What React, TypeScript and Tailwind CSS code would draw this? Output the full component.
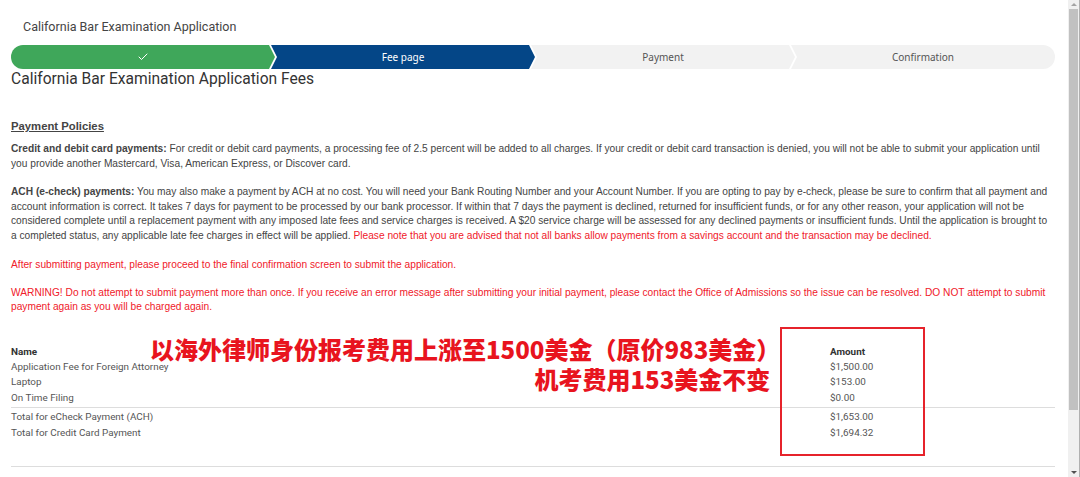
import { Check } from "lucide-react";

const steps = [
  { label: "", done: true },
  { label: "Fee page", active: true },
  { label: "Payment" },
  { label: "Confirmation" },
];

const fees = [
  { name: "Application Fee for Foreign Attorney", amount: "$1,500.00" },
  { name: "Laptop", amount: "$153.00" },
  { name: "On Time Filing", amount: "$0.00" },
];

const totals = [
  { name: "Total for eCheck Payment (ACH)", amount: "$1,653.00" },
  { name: "Total for Credit Card Payment", amount: "$1,694.32" },
];

function Stepper() {
  return (
    <div className="flex h-6 rounded-full overflow-hidden bg-white">
      {steps.map((s, i) => {
        const first = i === 0;
        const last = i === steps.length - 1;
        const shape = first
          ? "[clip-path:polygon(0_0,calc(100%_-_6px)_0,100%_50%,calc(100%_-_6px)_100%,0_100%)]"
          : last
          ? "[clip-path:polygon(0_0,100%_0,100%_100%,0_100%,6px_50%)] -ml-[4px]"
          : "[clip-path:polygon(0_0,calc(100%_-_6px)_0,100%_50%,calc(100%_-_6px)_100%,0_100%,6px_50%)] -ml-[4px]";
        const color = s.done
          ? "bg-[#3fa75a] text-white"
          : s.active
          ? "bg-[#044687] text-white"
          : "bg-[#f2f2f2] text-[#555]";
        return (
          <div key={i} className={`flex-1 flex items-center justify-center text-[10px] ${shape} ${color}`}>
            {s.done ? <Check size={12} strokeWidth={2} /> : s.label}
          </div>
        );
      })}
    </div>
  );
}

export default function App() {
  return (
    <div className="h-[477px] w-[1080px] overflow-hidden flex bg-white">
      <div className="flex-1 pl-[11px] pr-[13px] text-[#333]">
        {/* header */}
        <div className="pt-[17px] pl-[12px] h-[45px] text-[12.5px] leading-[20px] text-[#444] font-['Roboto',sans-serif]">
          California Bar Examination Application
        </div>
        <Stepper />
        <h1 className="text-[15.6px] leading-[20px] text-[#333] font-['Roboto',sans-serif]">
          California Bar Examination Application Fees
        </h1>

        {/* policies */}
        <div className="mt-[29px] font-['Liberation_Sans',Arial,sans-serif] text-[10.2px] leading-[15px] text-[#444]">
          <div className="text-[11.3px] leading-[16px] font-bold underline">Payment Policies</div>
          <p className="mt-[7px]">
            <b>Credit and debit card payments:</b> For credit or debit card payments, a processing fee of 2.5 percent
            will be added to all charges. If your credit or debit card transaction is denied, you will not be able to
            submit your application until you provide another Mastercard, Visa, American Express, or Discover card.
          </p>
          <p className="mt-[14px] leading-[14.7px]">
            <b>ACH (e-check) payments:</b> You may also make a payment by ACH at no cost. You will need your Bank Routing
            Number and your Account Number. If you are opting to pay by e-check, please be sure to confirm that all
            payment and account information is correct. It takes 7 days for payment to be processed by our bank
            processor. If within that 7 days the payment is declined, returned for insufficient funds, or for any other
            reason, your application will not be considered complete until a replacement payment with any imposed late
            fees and service charges is received. A $20 service charge will be assessed for any declined payments or
            insufficient funds. Until the application is brought to a completed status, any applicable late fee charges
            in effect will be applied.{" "}
            <span className="text-[#f0202a]">
              Please note that you are advised that not all banks allow payments from a savings account and the
              transaction may be declined.
            </span>
          </p>
          <p className="mt-[13px] text-[#f0202a]">
            After submitting payment, please proceed to the final confirmation screen to submit the application.
          </p>
          <p className="mt-[14px] text-[#f0202a] leading-[14.5px]">
            WARNING! Do not attempt to submit payment more than once. If you receive an error message after submitting
            your initial payment, please contact the Office of Admissions so the issue can be resolved. DO NOT attempt
            to submit payment again as you will be charged again.
          </p>
        </div>

        {/* fee table */}
        <div className="relative mt-[29px] font-['Roboto',sans-serif] text-[9.9px] leading-[15.3px] text-[#555]">
          <div className="grid grid-cols-[819px_1fr]">
            <div className="font-bold text-[#333]">Name</div>
            <div className="font-bold text-[#333]">Amount</div>
            {fees.map((f) => (
              <div key={f.name} className="contents">
                <div>{f.name}</div>
                <div>{f.amount}</div>
              </div>
            ))}
          </div>
          <div className="mt-[2px] border-t border-[#ddd] pt-[1px] grid grid-cols-[819px_1fr] leading-[16px]">
            {totals.map((f) => (
              <div key={f.name} className="contents">
                <div>{f.name}</div>
                <div>{f.amount}</div>
              </div>
            ))}
          </div>
          <div className="mt-[25px] border-t border-[#ddd]" />

          {/* annotation overlay */}
          <div className="absolute left-[139px] top-[-10px] text-right font-['Noto_Sans_CJK_SC',sans-serif] font-black text-[24px] leading-[30px] text-[#e8141e]">
            <div>以海外律师身份报考费用上涨至1500美金（原价983美金）</div>
            <div className="mr-[10px]">机考费用153美金不变</div>
          </div>
          <div className="absolute left-[769px] top-[-17px] w-[145px] h-[129px] border-2 border-[#e6232b]" />
        </div>
      </div>

      {/* scrollbar */}
      <div className="relative w-[12px] bg-[#f0f0f0] border-r border-[#b0b0b0]">
        <div className="absolute top-[3px] left-[3px] w-0 h-0 border-x-[3px] border-x-transparent border-b-[3px] border-b-[#a3a3a3]" />
        <div className="absolute top-[9px] left-[1px] w-[9px] h-[401px] bg-[#c1c1c1]" />
        <div className="absolute bottom-[3px] left-[3px] w-0 h-0 border-x-[3px] border-x-transparent border-t-[3px] border-t-[#505050]" />
      </div>
    </div>
  );
}
